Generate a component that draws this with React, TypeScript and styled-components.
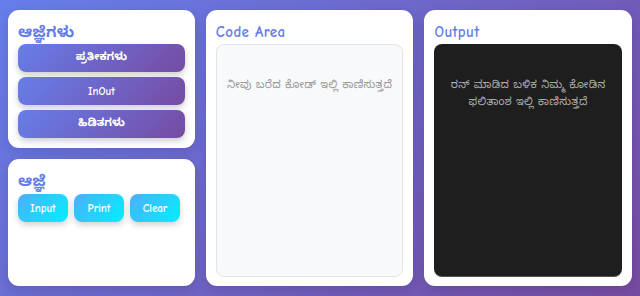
import React from "react";
import styled, { createGlobalStyle } from "styled-components";

const GlobalStyle = createGlobalStyle`
  html, body {
    margin: 0;
    padding: 0;
  }
  body {
    font-family: "Comic Sans MS", "Comic Neue", "Noto Sans Kannada", "Noto Sans", cursive, sans-serif;
    background: linear-gradient(135deg, #667eea 0%, #764ba2 100%);
    min-height: 100vh;
  }
`;

const Page = styled.div`
  display: grid;
  grid-template-columns: 0.9fr 1fr 1fr;
  gap: 11px;
  padding: 10px 8px;
  height: 296px;
  box-sizing: border-box;
`;

const Column = styled.div`
  display: flex;
  flex-direction: column;
  gap: 11px;
  min-height: 0;
`;

const Card = styled.div<{ $grow?: boolean }>`
  background: #ffffff;
  border-radius: 11px;
  padding: 10px 10px 9px;
  box-sizing: border-box;
  display: flex;
  flex-direction: column;
  box-shadow: 0 4px 12px rgba(0, 0, 0, 0.12);
  flex: ${(p) => (p.$grow ? 1 : "none")};
  min-height: 0;
`;

const Title = styled.h3`
  margin: 0;
  font-size: 15px;
  font-weight: bold;
  color: #667eea;
  line-height: 24px;
  letter-spacing: 0.4px;
`;

const Stack = styled.div`
  display: flex;
  flex-direction: column;
  gap: 5px;
  padding-bottom: 1px;
`;

const NavButton = styled.button`
  height: 28px;
  border: none;
  border-radius: 8px;
  background: linear-gradient(135deg, #667eea 0%, #764ba2 100%);
  color: #ffffff;
  font-family: inherit;
  font-size: 11px;
  font-weight: bold;
  box-shadow: 0 3px 6px rgba(0, 0, 0, 0.2);
  cursor: pointer;
`;

const Row = styled.div`
  display: flex;
  gap: 6px;
  margin-top: 1px;
`;

const CmdButton = styled.button`
  width: 50px;
  height: 28px;
  border: none;
  border-radius: 8px;
  background: linear-gradient(135deg, #4facfe 0%, #00f2fe 100%);
  color: #ffffff;
  font-family: inherit;
  font-size: 11px;
  font-weight: bold;
  box-shadow: 0 3px 6px rgba(0, 0, 0, 0.18);
  cursor: pointer;
`;

const Editor = styled.div`
  flex: 1;
  background: #f8f9fa;
  border: 1.5px solid #e1e4e8;
  border-radius: 8px;
  padding: 31px 10px;
  color: #999999;
  font-size: 11px;
  text-align: center;
  line-height: 17px;
  letter-spacing: 0.3px;
`;

const Console = styled.div`
  flex: 1;
  background: #1e1e1e;
  border-radius: 8px;
  border-bottom: 1px solid #555;
  padding: 32px 12px;
  color: #aaaaaa;
  font-size: 11px;
  text-align: center;
  line-height: 17px;
  letter-spacing: 0.3px;
`;

export default function App() {
  return (
    <>
      <GlobalStyle />
      <Page>
        <Column>
          <Card>
            <Title>ಆಜ್ಞೆಗಳು</Title>
            <Stack>
              <NavButton>ಪ್ರತೀಕಗಳು</NavButton>
              <NavButton>InOut</NavButton>
              <NavButton>ಹಿಡಿತಗಳು</NavButton>
            </Stack>
          </Card>
          <Card $grow>
            <Title>ಆಜ್ಞೆ</Title>
            <Row>
              <CmdButton>Input</CmdButton>
              <CmdButton>Print</CmdButton>
              <CmdButton>Clear</CmdButton>
            </Row>
          </Card>
        </Column>
        <Card $grow>
          <Title>Code Area</Title>
          <Editor>ನೀವು ಬರೆದ ಕೋಡ್ ಇಲ್ಲಿ ಕಾಣಿಸುತ್ತದೆ</Editor>
        </Card>
        <Card $grow>
          <Title>Output</Title>
          <Console>ರನ್ ಮಾಡಿದ ಬಳಿಕ ನಿಮ್ಮ ಕೋಡಿನ ಫಲಿತಾಂಶ ಇಲ್ಲಿ ಕಾಣಿಸುತ್ತದೆ</Console>
        </Card>
      </Page>
    </>
  );
}
